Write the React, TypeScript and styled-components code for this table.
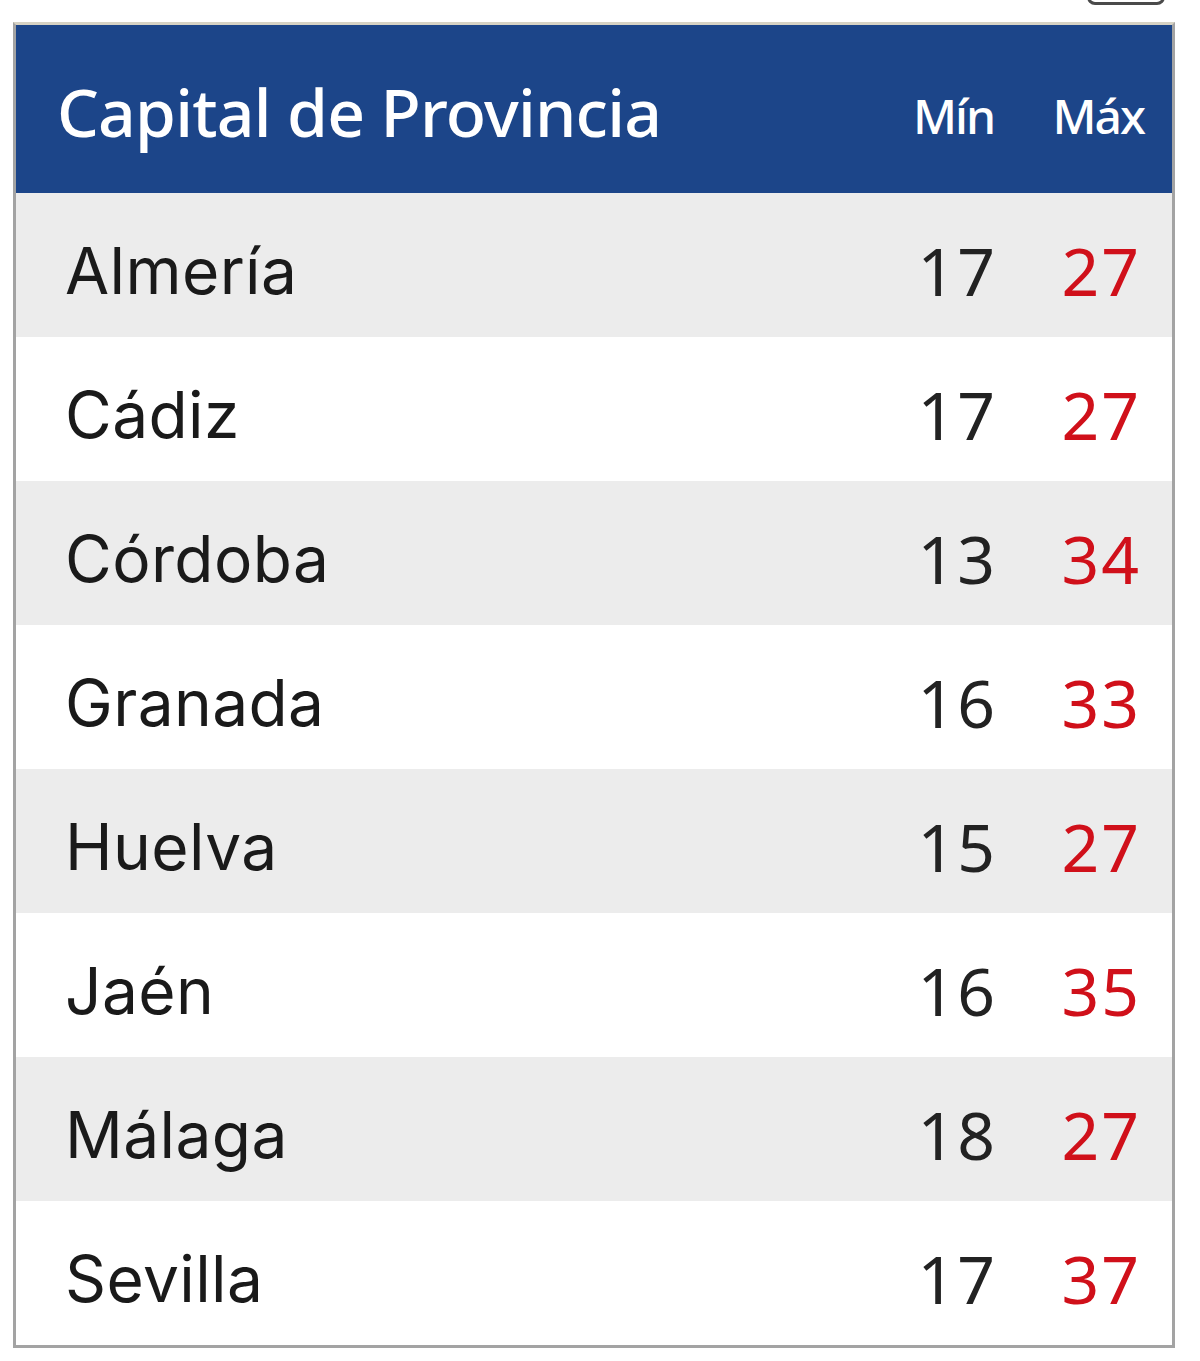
import * as React from 'react';
import styled, { createGlobalStyle } from 'styled-components';

const GlobalStyle = createGlobalStyle`
  html, body {
    margin: 0;
    padding: 0;
    background: #ffffff;
  }
  body {
    font-family: 'Noto Sans', 'Open Sans', sans-serif;
  }
`;

interface CityTemp {
  city: string;
  min: number;
  max: number;
}

const temperatures: CityTemp[] = [
  { city: 'Almería', min: 17, max: 27 },
  { city: 'Cádiz', min: 17, max: 27 },
  { city: 'Córdoba', min: 13, max: 34 },
  { city: 'Granada', min: 16, max: 33 },
  { city: 'Huelva', min: 15, max: 27 },
  { city: 'Jaén', min: 16, max: 35 },
  { city: 'Málaga', min: 18, max: 27 },
  { city: 'Sevilla', min: 17, max: 37 }
];

const Page = styled.div`
  width: 1200px;
  padding: 0 25px 0 13px;
  box-sizing: border-box;
`;

const Toolbar = styled.div`
  height: 22px;
  display: flex;
  justify-content: flex-end;
  padding-right: 10px;
  overflow: hidden;
`;

const ToolButton = styled.div`
  width: 78px;
  height: 30px;
  margin-top: -25px;
  border: 3px solid #4a4a4a;
  border-radius: 8px;
  box-sizing: border-box;
`;

const Table = styled.div`
  border: 3px solid #a3a3a3;
  border-top-color: #d6d2c4;
  display: flex;
  flex-direction: column;
`;

const HeaderRow = styled.div`
  height: 168px;
  background: #1c4589;
  display: grid;
  grid-template-columns: 1fr 120px 150px;
  align-items: center;
  color: #ffffff;
  padding: 0 28px 0 41px;
  box-sizing: border-box;
`;

const HeaderTitle = styled.div`
  font-size: 66px;
  font-weight: 500;
  letter-spacing: -0.8px;
  padding-top: 4px;
`;

const HeaderCell = styled.div`
  font-size: 48px;
  font-weight: 500;
  letter-spacing: -2px;
  text-align: right;
  padding-top: 12px;
`;

const Row = styled.div<{ $shaded: boolean }>`
  height: 144px;
  background: ${(p) => (p.$shaded ? '#ececec' : '#ffffff')};
  display: grid;
  grid-template-columns: 1fr 124px 144px;
  align-items: center;
  padding: 0 31px 0 49px;
  box-sizing: border-box;
`;

const CityCell = styled.div`
  font-family: Inter, 'Noto Sans', sans-serif;
  font-size: 64px;
  color: #1a1a1a;
  letter-spacing: 0.4px;
  padding-top: 10px;
`;

const NumCell = styled.div<{ $hot?: boolean }>`
  font-size: 66px;
  color: ${(p) => (p.$hot ? '#d0101a' : '#222222')};
  text-align: right;
  letter-spacing: 2px;
  padding-top: 10px;
`;

export default function App() {
  return (
    <Page>
      <GlobalStyle />
      <Toolbar>
        <ToolButton />
      </Toolbar>
      <Table>
        <HeaderRow>
          <HeaderTitle>Capital de Provincia</HeaderTitle>
          <HeaderCell>Mín</HeaderCell>
          <HeaderCell>Máx</HeaderCell>
        </HeaderRow>
        {temperatures.map((t, index) => (
          <Row key={t.city} $shaded={index % 2 === 0}>
            <CityCell>{t.city}</CityCell>
            <NumCell>{t.min}</NumCell>
            <NumCell $hot>{t.max}</NumCell>
          </Row>
        ))}
      </Table>
    </Page>
  );
}
